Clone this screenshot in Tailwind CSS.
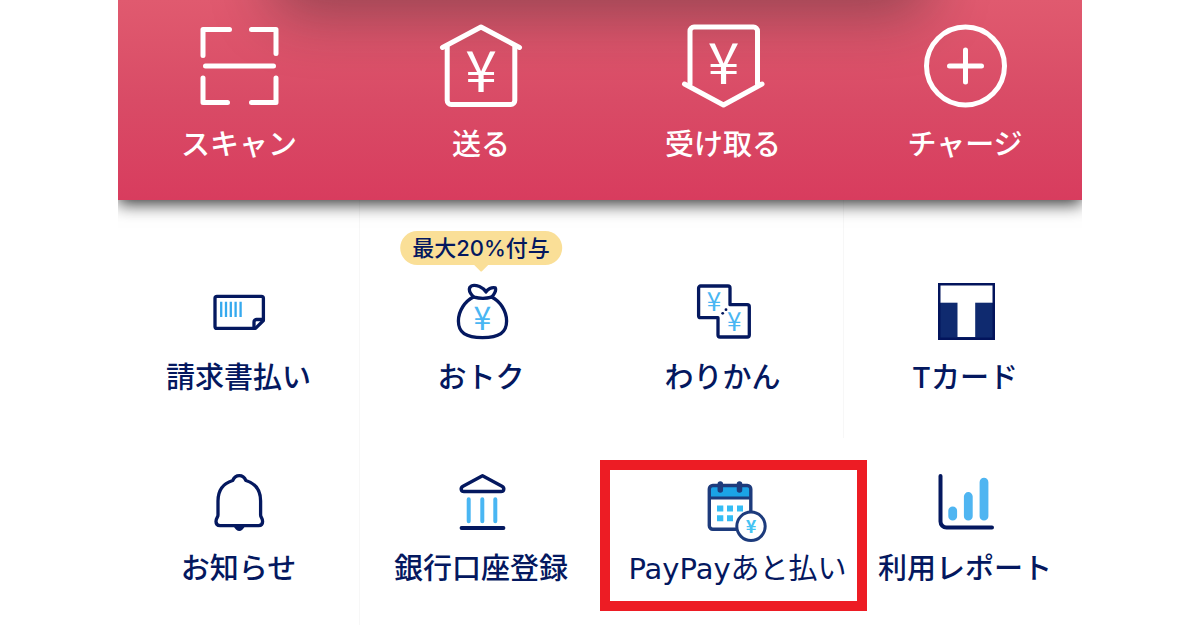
<!DOCTYPE html>
<html lang="ja">
<head>
    <meta charset="UTF-8">
    <meta name="viewport" content="width=device-width, initial-scale=1.0">
    <title>PayPay メニュー</title>
    <script src="https://cdn.jsdelivr.net/npm/@tailwindcss/browser@4"></script>
</head>
<body class="bg-white font-['Inter','Noto_Sans_CJK_JP',sans-serif] text-[29px] leading-10 font-medium text-[#04185f]">
    <main class="mx-auto w-full max-w-[964px]">
        <!-- Main actions -->
        <nav class="relative h-[200px] pt-6 text-white shadow-[0_4px_16px_rgba(0,0,0,0.8)] [clip-path:inset(0_0_-30px_0)] bg-linear-to-b from-[#e05a6f] via-[#d94b66] to-[#d83c5e]">
            <!-- Shade cast by the card above -->
            <div class="absolute bottom-full inset-x-[16%] h-24 rounded-3xl shadow-[0_14px_60px_rgba(20,30,30,0.38)]"></div>
            <div class="relative grid grid-cols-4 -mr-1">
                <a href="#" class="flex flex-col items-center gap-[17px]">
                    <svg class="size-[84px]" viewBox="0 0 84 84" fill="none" stroke="currentColor" stroke-width="5" stroke-linecap="round" stroke-linejoin="round">
                        <path d="M6 31.5V5.5H32.5M54.5 5.5H79V29.5M8.5 42H76.5M6 54V78.5H30.5M54.5 78.5H79V54" />
                    </svg>
                    <span>スキャン</span>
                </a>
                <a href="#" class="flex flex-col items-center gap-[17px]">
                    <svg class="size-[84px] overflow-visible" viewBox="0 0 84 84" fill="none" stroke="currentColor" stroke-width="5" stroke-linecap="round" stroke-linejoin="round">
                        <path d="M3.5 23.5L42 3L80.5 23.5" />
                        <path d="M8.2 23V76.5a4 4 0 0 0 4 4H71.8a4 4 0 0 0 4-4V23" />
                        <text x="42" y="68" text-anchor="middle" font-size="57" font-family="Noto Sans CJK JP" font-weight="400" fill="currentColor" stroke="none">¥</text>
                    </svg>
                    <span>送る</span>
                </a>
                <a href="#" class="flex flex-col items-center gap-[17px]">
                    <svg class="size-[84px] overflow-visible" viewBox="0 0 84 84" fill="none" stroke="currentColor" stroke-width="5" stroke-linecap="round" stroke-linejoin="round">
                        <path d="M3.5 60L42.5 81L81 60" />
                        <path d="M9 60V7a4 4 0 0 1 4-4H72.5a4 4 0 0 1 4 4V60" />
                        <text x="42.5" y="60" text-anchor="middle" font-size="57" font-family="Noto Sans CJK JP" font-weight="400" fill="currentColor" stroke="none">¥</text>
                    </svg>
                    <span>受け取る</span>
                </a>
                <a href="#" class="flex flex-col items-center gap-[17px]">
                    <svg class="size-[84px]" viewBox="0 0 84 84" fill="none" stroke="currentColor" stroke-width="5" stroke-linecap="round">
                        <circle cx="42.5" cy="42" r="39" />
                        <path d="M42.5 26V58M26.5 42H58.5" />
                    </svg>
                    <span>チャージ</span>
                </a>
            </div>
        </nav>

        <!-- Services -->
        <nav class="grid grid-cols-4 -mr-1">
            <a href="#" class="flex flex-col items-center gap-4 pt-[82px] pb-10 border-r border-[#f7f7f7]">
                <svg class="size-[60px]" viewBox="0 0 60 60" fill="none" stroke="currentColor" stroke-width="3.3" stroke-linejoin="round">
                    <path d="M46.5 46.4H8a2 2 0 0 1-2-2V16.3a2 2 0 0 1 2-2H52.4a2 2 0 0 1 2 2V38.5z" />
                    <path d="M54 37.5H47.5a2.5 2.5 0 0 0-2.5 2.5V46" />
                    <path d="M12.2 19.7V35M17 19.7V35M21.8 19.7V35M26.6 19.7V35M31.6 19.7V35" stroke="#35a9ee" stroke-width="2.3" />
                </svg>
                <span>請求書払い</span>
            </a>
            <a href="#" class="relative flex flex-col items-center gap-4 pt-[82px] pb-10">
                <span class="absolute top-[31px] left-1/2 -translate-x-1/2 whitespace-nowrap rounded-full bg-[#fadf97] px-3 text-[22px] leading-[34px]">
                    最大20%付与
                    <svg class="absolute top-full left-1/2 -translate-x-1/2 -mt-px w-4 h-2" viewBox="0 0 16 8"><path d="M0 0H16L9 7Q8 8 7 7z" fill="#fadf97" /></svg>
                </span>
                <svg class="size-[60px]" viewBox="0 0 60 60" fill="none" stroke="currentColor" stroke-width="3.3" stroke-linejoin="round" stroke-linecap="round">
                    <path d="M22.5 15C14 19 7.4 29 7.4 39C7.4 50.5 14.5 55.6 31.5 55.6S55.6 50.5 55.6 39C55.6 29 49 19 40.5 15" />
                    <path d="M23 15.2C20 12.5 17.5 8.5 18.8 5.5C20.5 2.8 25 3.2 28.5 4.5C31.5 5.8 33.8 8 35 10C36.5 7.5 40.5 4.8 44.3 5.8C45.5 8.5 43 13 40.5 15.2Q32 17.5 23 15.2z" />
                    <text x="31.5" y="48" text-anchor="middle" font-size="32" font-family="Noto Sans CJK JP" font-weight="400" fill="#49b6f3" stroke="none">¥</text>
                </svg>
                <span>おトク</span>
            </a>
            <a href="#" class="flex flex-col items-center gap-4 pt-[82px] pb-10 border-r border-[#f7f7f7]">
                <svg class="size-[60px]" viewBox="0 0 60 60" fill="none" stroke="currentColor" stroke-width="3.3" stroke-linejoin="round">
                    <path d="M37 22.7H54.3a2 2 0 0 1 2 2V53a2 2 0 0 1-2 2H27a2 2 0 0 1-2-2V35.7H7.6a2 2 0 0 1-2-2V6a2 2 0 0 1 2-2H35a2 2 0 0 1 2 2z" />
                    <g fill="currentColor" stroke="none"><circle cx="29.7" cy="31.3" r="1.4" /><circle cx="33" cy="27.7" r="1.4" /></g>
                    <g font-family="Noto Sans CJK JP" font-size="26" font-weight="400" text-anchor="middle" fill="#49b6f3" stroke="none">
                        <text x="21" y="29">¥</text>
                        <text x="41.3" y="48.7">¥</text>
                    </g>
                </svg>
                <span>わりかん</span>
            </a>
            <a href="#" class="flex flex-col items-center gap-4 pt-[82px] pb-10">
                <svg class="size-[60px]" viewBox="0 0 60 60">
                    <rect x="3" y="1" width="57" height="57" fill="#03145c" />
                    <rect x="5.5" y="20" width="52" height="35.5" fill="#0f2a6f" />
                    <rect x="5.5" y="3.5" width="52" height="17.2" fill="#fff" />
                    <rect x="22.5" y="20" width="17.7" height="35" fill="#fff" />
                </svg>
                <span>Tカード</span>
            </a>

            <a href="#" class="flex flex-col items-center gap-4 pt-[35px] pb-9 border-r border-[#f7f7f7]">
                <svg class="size-[60px]" viewBox="0 0 60 60" fill="none" stroke="currentColor" stroke-width="3.3" stroke-linejoin="round">
                    <path d="M30.3 2.7C26.8 2.7 25 4.5 23.7 7.5C14 10.5 9 18 9 28V42C9 44.5 7 45 7 48.5C7 51 8.5 52.6 11 52.6H49.6C52.1 52.6 53.6 51 53.6 48.5C53.6 45 51.6 44.5 51.6 42V28C51.6 18 46.6 10.5 36.9 7.5C35.6 4.5 33.8 2.7 30.3 2.7z" />
                    <path d="M24.5 53H36Q33.5 58 30.3 58T24.5 53z" fill="currentColor" stroke="none" />
                </svg>
                <span>お知らせ</span>
            </a>
            <a href="#" class="flex flex-col items-center gap-4 pt-[35px] pb-9">
                <svg class="size-[60px]" viewBox="0 0 60 60" fill="none" stroke="currentColor" stroke-linejoin="round" stroke-linecap="round">
                    <path d="M31.5 2.7L51 13.2C54 15 53 18.5 50 18.5H13C10 18.5 9 15 12 13.2z" stroke-width="3.4" />
                    <path d="M17.7 26.3V48.3M31.3 26.3V48.3M44.3 26.3V48.3" stroke="#49b6f3" stroke-width="4" />
                    <path d="M10.5 55H52.5" stroke-width="3.8" />
                </svg>
                <span>銀行口座登録</span>
            </a>
            <div class="relative">
                <!-- Highlighted entry -->
                <a href="#" class="absolute top-[22px] bottom-[14px] -left-[2px] -right-[23px] flex flex-col items-center gap-1 border-10 border-[#ed1c24] bg-white pt-[11px] pl-2 text-[29px] font-normal font-['DejaVu_Sans','Noto_Sans_CJK_JP',sans-serif]">
                    <svg class="size-16 shrink-0" viewBox="0 0 64 64" fill="none" stroke="#1d3b7c">
                        <rect x="3.3" y="4.5" width="41.5" height="43.8" rx="3.5" fill="#fff" />
                        <path d="M3.3 17V8a3.5 3.5 0 0 1 3.5-3.5H41.3a3.5 3.5 0 0 1 3.5 3.5V17z" fill="#1ba3e6" stroke="none" />
                        <rect x="3.3" y="4.5" width="41.5" height="43.8" rx="3.5" stroke-width="3.4" />
                        <path d="M3 17H45" stroke-width="3" />
                        <path d="M14.3 3V9M33.5 3V9" stroke-width="5.5" stroke-linecap="round" />
                        <path d="M11 27.5H17.3M21 27.5H27M31 27.5H37M11 37.2H17.3M21 37.2H27" stroke="#35bdf5" stroke-width="6" />
                        <circle cx="45" cy="45.3" r="14.2" fill="#fff" stroke-width="3" />
                        <text x="45" y="52" text-anchor="middle" font-size="18" font-family="Noto Sans CJK JP" font-weight="700" fill="#45c3f3" stroke="none">¥</text>
                    </svg>
                    <span class="whitespace-nowrap">PayPayあと払い</span>
                </a>
            </div>
            <a href="#" class="flex flex-col items-center gap-4 pt-[35px] pb-9">
                <svg class="size-[60px]" viewBox="0 0 60 60" fill="none" stroke="currentColor" stroke-linejoin="round" stroke-linecap="round">
                    <path d="M5.5 3V48.5a6 6 0 0 0 6 6H57" stroke-width="4" />
                    <path d="M17.7 37.8V43.2M33.3 23.5V43.2M49 9.2V43.2" stroke="#4fb5f1" stroke-width="8.8" />
                </svg>
                <span>利用レポート</span>
            </a>
        </nav>
    </main>
</body>
</html>
